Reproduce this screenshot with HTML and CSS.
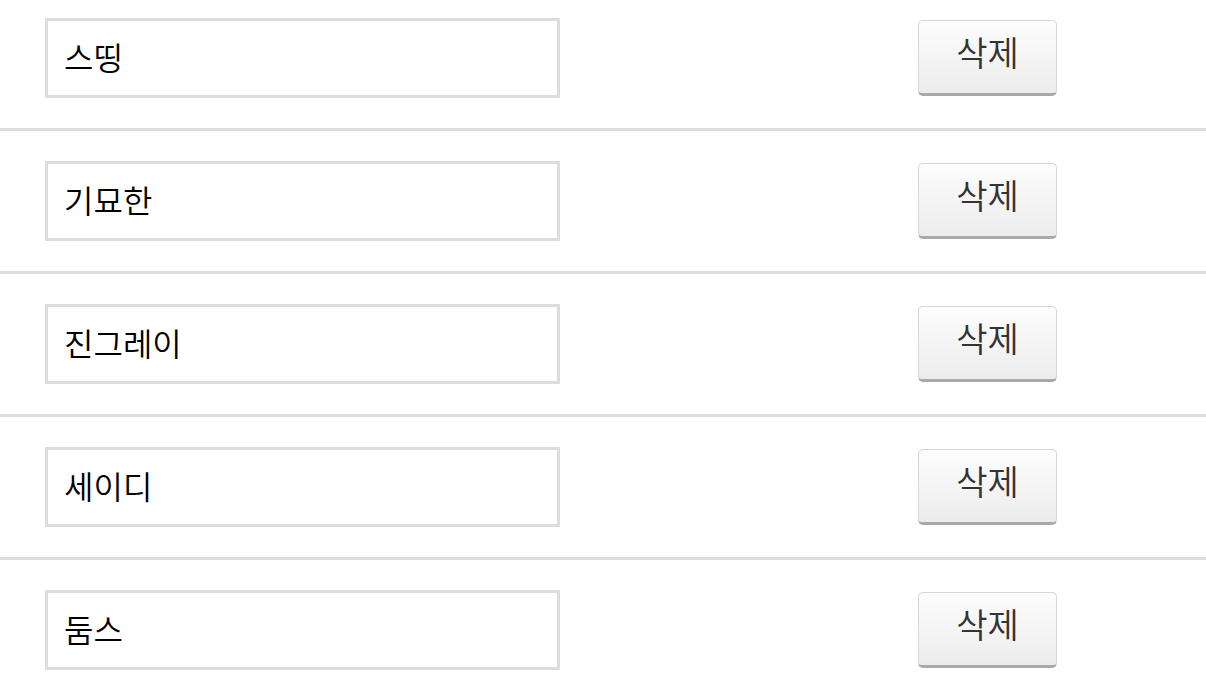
FILE: index.html
```html
<!DOCTYPE html>
<html lang="ko">
<head>
  <meta charset="UTF-8">
  <meta name="viewport" content="width=device-width, initial-scale=1.0">
  <title>항목 편집</title>
  <link rel="stylesheet" href="styles.css">
</head>
<body>
  <div class="list">
    <div class="row">
      <input type="text" class="name-input" value="스띵">
      <button class="btn-delete">삭제</button>
    </div>
    <div class="row">
      <input type="text" class="name-input" value="기묘한">
      <button class="btn-delete">삭제</button>
    </div>
    <div class="row">
      <input type="text" class="name-input" value="진그레이">
      <button class="btn-delete">삭제</button>
    </div>
    <div class="row">
      <input type="text" class="name-input" value="세이디">
      <button class="btn-delete">삭제</button>
    </div>
    <div class="row">
      <input type="text" class="name-input" value="둠스">
      <button class="btn-delete">삭제</button>
    </div>
  </div>
</body>
</html>
```

FILE: styles.css
```css
body {
  font-family: "Noto Sans CJK KR", "Noto Sans", sans-serif;
  background-color: #fff;
  margin: 0;
  padding: 0;
}
.list {
  overflow: hidden;
}
.row {
  display: flex;
  align-items: center;
  padding: 30px 149px 30px 45px;
  border-bottom: 3px solid #dddddd;
}
.row:first-child {
  padding-top: 18px;
}
.name-input {
  box-sizing: border-box;
  width: 515px;
  height: 80px;
  border: 3px solid #dddddd;
  padding: 0 16px 5px;
  font-family: inherit;
  font-size: 32px;
  font-weight: 350;
  color: #000;
  background: #fff;
  outline: none;
}
.btn-delete {
  box-sizing: border-box;
  margin-left: auto;
  width: 139px;
  height: 76px;
  padding: 0 0 12px;
  font-family: inherit;
  font-size: 34px;
  font-weight: 350;
  color: #333;
  background: linear-gradient(#fdfdfd, #ececec);
  border: 1px solid #d6d6d6;
  border-bottom: 3px solid #a9a9a9;
  border-radius: 5px;
  cursor: pointer;
}
```
